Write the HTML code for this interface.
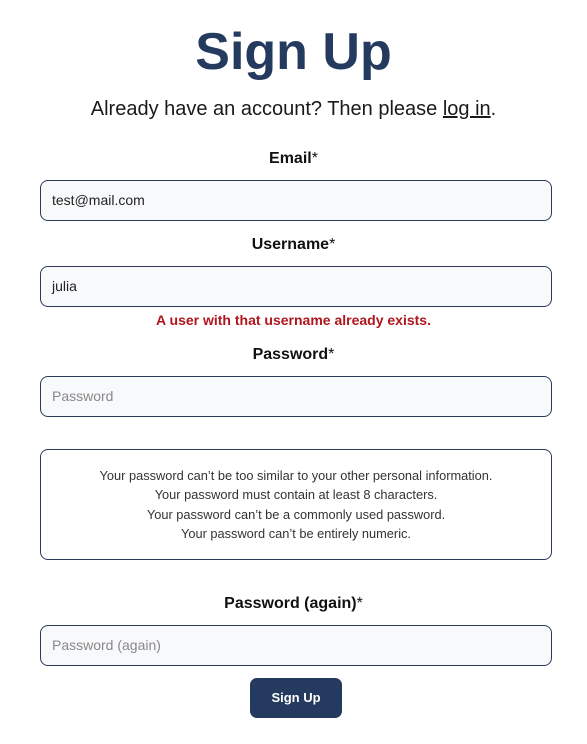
<!DOCTYPE html>
<html><head><meta charset="utf-8"><style>
*{box-sizing:border-box;margin:0;padding:0}
body{width:587px;height:744px;background:#fff;font-family:"Liberation Sans",Arial,sans-serif;color:#111;position:relative;overflow:hidden}
.a{position:absolute;left:0;width:587px;text-align:center}
h1{position:absolute;left:0;width:587px;text-align:center;top:20px;font-size:52px;font-weight:700;color:#243a5e;line-height:64px}
.sub{top:97px;font-size:20px;line-height:24px;color:#1a1a1a}
.sub u{text-decoration:underline}
.lbl{font-size:16px;font-weight:700;line-height:20px}
.lbl span{font-weight:400}
.in{position:absolute;left:40px;width:512px;height:41px;border:1px solid #2a3b58;border-radius:8px;background:#f8f9fb;font-size:14px;line-height:39px;padding-left:11px;color:#222}
.ph{color:#888}
.err{top:312px;font-size:14px;font-weight:700;color:#b0161e;letter-spacing:0;line-height:16px}
.box{position:absolute;left:40px;top:449px;width:512px;height:111px;border:1px solid #2a3b58;border-radius:8px;font-size:12.8px;line-height:19.3px;color:#333;text-align:center;padding-top:16px}
.btn{position:absolute;left:250px;top:678px;width:92px;height:40px;background:#243a5e;border-radius:7px;color:#fff;font-weight:700;font-size:13px;text-align:center;line-height:40px}
</style></head><body>
<h1>Sign Up</h1>
<div class="a sub">Already have an account? Then please <u>log in</u>.</div>
<div class="a lbl" style="top:149px">Email<span>*</span></div>
<div class="in" style="top:180px">test@mail.com</div>
<div class="a lbl" style="top:235px">Username<span>*</span></div>
<div class="in" style="top:266px">julia</div>
<div class="a err">A user with that username already exists.</div>
<div class="a lbl" style="top:345px">Password<span>*</span></div>
<div class="in ph" style="top:376px">Password</div>
<div class="box">Your password can’t be too similar to your other personal information.<br>Your password must contain at least 8 characters.<br>Your password can’t be a commonly used password.<br>Your password can’t be entirely numeric.</div>
<div class="a lbl" style="top:594px">Password (again)<span>*</span></div>
<div class="in ph" style="top:625px">Password (again)</div>
<div class="btn">Sign Up</div>
</body></html>
